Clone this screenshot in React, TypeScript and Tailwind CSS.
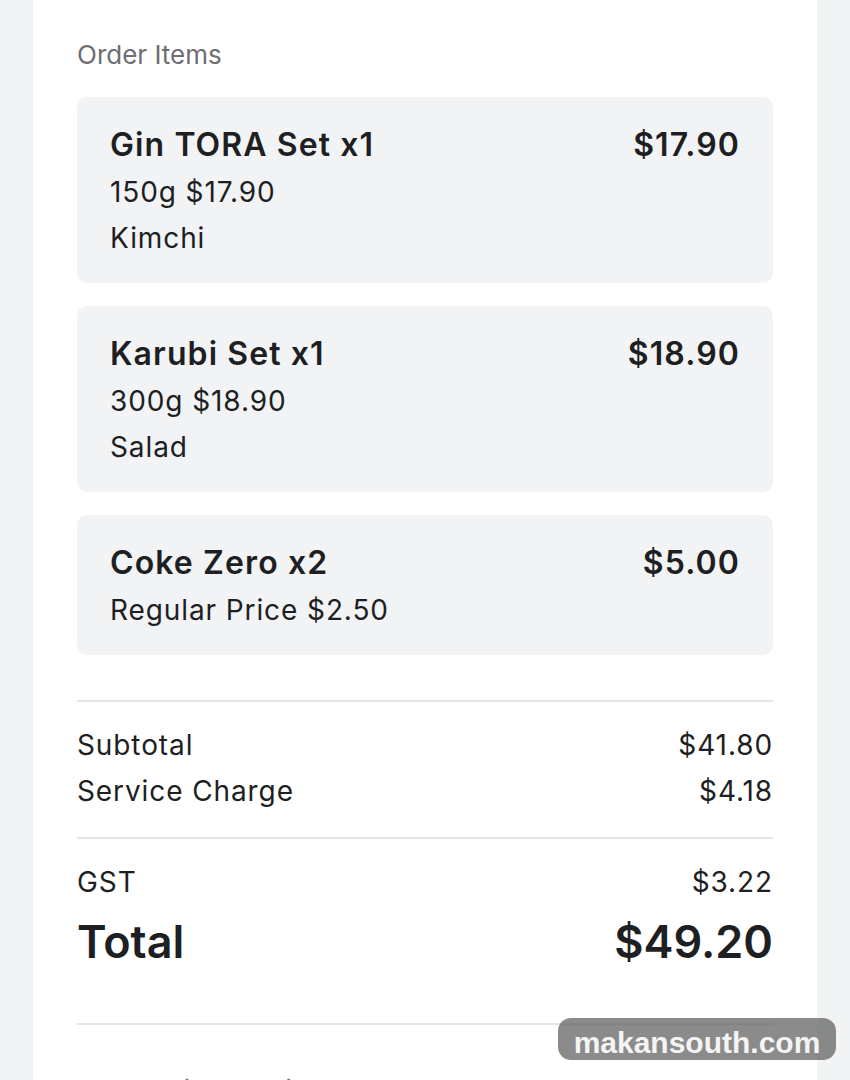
import React from "react";

const items = [
  { title: "Gin TORA Set x1", price: "$17.90", lines: ["150g $17.90", "Kimchi"] },
  { title: "Karubi Set x1", price: "$18.90", lines: ["300g $18.90", "Salad"] },
  { title: "Coke Zero x2", price: "$5.00", lines: ["Regular Price $2.50"] },
];

export default function App() {
  return (
    <div
      className="relative h-[1080px] w-[850px] overflow-hidden bg-[#f2f3f5] px-[33px]"
      style={{ fontFamily: "Inter, 'Noto Sans', sans-serif" }}
    >
      <div className="h-full bg-white px-[44px] pt-[39px] text-[#1d1f23]">
        <div className="mb-[26px] text-[26px] leading-[32px] text-[#6e6e73]">Order Items</div>
        <div className="flex flex-col gap-[23px]">
          {items.map((it) => (
            <div key={it.title} className="rounded-[10px] bg-[#f2f3f5] px-[33px] pb-[22px] pt-[24px]">
              <div className="flex items-center justify-between text-[32px] font-semibold leading-[48px] tracking-[1.1px]">
                <span>{it.title}</span>
                <span>{it.price}</span>
              </div>
              {it.lines.map((l) => (
                <div key={l} className="text-[28px] leading-[46px] tracking-[0.9px]">
                  {l}
                </div>
              ))}
            </div>
          ))}
        </div>
        <div className="mt-[45px] h-[2px] bg-[#e4e5e7]" />
        <div className="pt-[20px] text-[28px] leading-[46px] tracking-[0.9px]">
          <div className="flex justify-between">
            <span>Subtotal</span>
            <span>$41.80</span>
          </div>
          <div className="flex justify-between">
            <span>Service Charge</span>
            <span>$4.18</span>
          </div>
        </div>
        <div className="mt-[23px] h-[2px] bg-[#e4e5e7]" />
        <div className="pt-[20px]">
          <div className="flex justify-between text-[28px] leading-[46px] tracking-[0.9px]">
            <span>GST</span>
            <span>$3.22</span>
          </div>
          <div className="flex items-center justify-between text-[45px] font-semibold leading-[74px]">
            <span>Total</span>
            <span>$49.20</span>
          </div>
        </div>
        <div className="mt-[44px] h-[2px] bg-[#e4e5e7]" />
        <div className="mt-[49px] text-[26px] leading-[32px] text-[#6e6e73]">Transaction Details</div>
      </div>
      <div
        className="absolute left-[558px] top-[1018px] flex h-[42px] w-[278px] items-center justify-center rounded-[13px] bg-[rgba(90,90,90,0.7)] pt-[6px] text-[30px] font-bold text-[#f4f4f4]"
        style={{ fontFamily: "'Liberation Sans', Arial, sans-serif" }}
      >
        makansouth.com
      </div>
    </div>
  );
}
